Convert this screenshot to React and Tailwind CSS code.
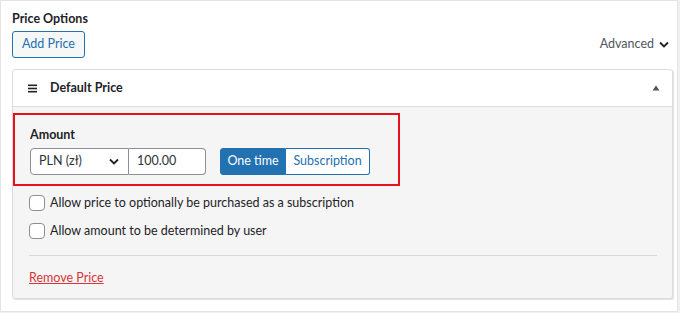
import React from 'react'

const font = { fontFamily: 'Lato, "Noto Sans", sans-serif' }

function Chevron({ className = '' }) {
  return (
    <svg className={className} width="10" height="7" viewBox="0 0 10 7" fill="none">
      <path d="M1 1.5L5 5.5L9 1.5" stroke="currentColor" strokeWidth="1.8" />
    </svg>
  )
}

function Checkbox({ label }) {
  return (
    <label className="flex items-center gap-[5px] h-[28px]">
      <span className="w-[16px] h-[16px] rounded-[4px] border border-[#8c8f94] bg-white shrink-0" />
      <span className="text-[12.5px] text-[#1d2327]">{label}</span>
    </label>
  )
}

export default function App() {
  return (
    <div className="w-[680px] h-[313px] bg-[#f0f0f1] overflow-hidden" style={font}>
      <div className="w-[678px] h-[312px] bg-white border border-[#e4e4e6] pl-[11px] pt-[9px]">
        {/* Title */}
        <h2 className="text-[12.5px] font-bold text-[#1d2327] leading-[18px]">Price Options</h2>
        <div className="flex items-center justify-between mt-[3px] pr-[8px]">
          <button className="h-[27px] px-[9px] text-[12.5px] text-[#2271b1] border border-[#2271b1] bg-[#f6f7f7] rounded-[3px]">
            Add Price
          </button>
          <div className="flex items-center gap-[5px] text-[12.5px] text-[#50575e]">
            Advanced
            <Chevron className="text-[#1d2327]" />
          </div>
        </div>

        {/* Card */}
        <div className="mt-[11px] w-[661px] border border-[#dcdcde] rounded-[3px] bg-[#f5f5f5] shadow-[1px_1px_1px_rgba(0,0,0,0.12)]">
          <div className="h-[37px] bg-white border-b border-[#dcdcde] flex items-center pl-[15px] pr-[12px] rounded-t-[3px]">
            <svg width="9" height="9" viewBox="0 0 9 9" className="text-[#1d2327]">
              <rect x="0" y="0.5" width="9" height="1.6" fill="currentColor" />
              <rect x="0" y="3.7" width="9" height="1.6" fill="currentColor" />
              <rect x="0" y="6.9" width="9" height="1.6" fill="currentColor" />
            </svg>
            <span className="ml-[13px] text-[12.5px] font-bold text-[#1d2327]">Default Price</span>
            <svg width="8" height="6" viewBox="0 0 8 6" className="ml-auto text-[#50575e]">
              <path d="M4 0.5L7.5 5.5H0.5Z" fill="currentColor" />
            </svg>
          </div>

          <div className="pt-[6px] pb-[10px]">
            {/* Amount (highlighted) */}
            <div className="w-[387px] border-2 border-[#e8121f] pl-[15px] pt-[11px] pb-[9px]">
              <div className="text-[12.5px] font-bold text-[#1d2327] leading-[18px]">Amount</div>
              <div className="flex items-center mt-[4px]">
                <div className="w-[99px] h-[27px] border border-[#8c8f94] rounded-l-[4px] bg-white flex items-center justify-between pl-[8px] pr-[9px] text-[12.5px] text-[#2c3338]">
                  PLN (zł)
                  <Chevron className="text-[#1d2327]" />
                </div>
                <div className="w-[77px] h-[27px] border border-l-0 border-[#8c8f94] rounded-r-[4px] bg-white flex items-center pl-[8px] text-[12.5px] text-[#2c3338]">
                  100.00
                </div>
                <div className="flex ml-[14px] h-[27px]">
                  <button className="w-[66px] h-full bg-[#2271b1] border border-[#2271b1] text-white text-[12.5px] rounded-l-[3px]">
                    One time
                  </button>
                  <button className="w-[84px] h-full bg-white border border-l-0 border-[#2271b1] text-[#2271b1] text-[12.5px] rounded-r-[3px]">
                    Subscription
                  </button>
                </div>
              </div>
            </div>

            <div className="px-[16px] mt-[3px]">
              <Checkbox label="Allow price to optionally be purchased as a subscription" />
              <Checkbox label="Allow amount to be determined by user" />
              <div className="mt-[10px] border-t border-[#d3dcdc] mr-[-1px]" />
              <a href="#" className="inline-block mt-[13px] text-[12.5px] text-[#d63638] underline leading-[18px]">
                Remove Price
              </a>
            </div>
          </div>
        </div>
      </div>
    </div>
  )
}
